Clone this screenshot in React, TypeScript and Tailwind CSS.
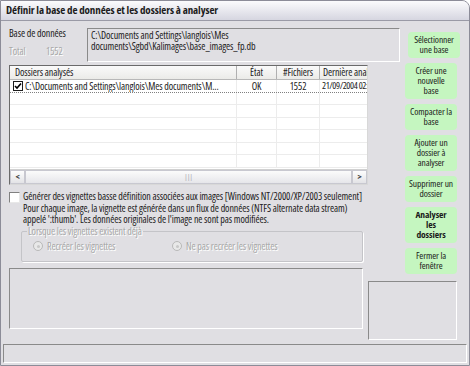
const sunken = "border border-t-[#8a8a8a] border-l-[#8a8a8a] border-b-white border-r-white";
const disabled = "text-[#a8a8a8] [text-shadow:1px_1px_0_#ffffff]";

function GreenButton({ lines, bold }: { lines: string[]; bold?: boolean }) {
  return (
    <div
      className={`w-[52px] rounded-[4px] bg-[#c5f6c0] py-[3px] text-center text-[9.5px] leading-[10px] text-[#1a1a1a] ${
        bold ? "font-bold" : ""
      }`}
    >
      {lines.map((l) => (
        <div key={l}>{l}</div>
      ))}
    </div>
  );
}

function Radio({ label }: { label: string }) {
  return (
    <div className="flex items-center gap-[4px]">
      <span className="flex h-[10px] w-[10px] items-center justify-center rounded-full border border-[#b8b8b8] bg-[#e8e8e8]">
        <span className="h-[3px] w-[3px] rounded-full bg-[#c8c8c8]" />
      </span>
      <span className={disabled}>{label}</span>
    </div>
  );
}

const rows = [0, 1, 2, 3, 4, 5, 6];

export default function App() {
  return (
    <div className="h-[366px] w-[470px] bg-white font-['Open_Sans',sans-serif] text-[10px] tracking-[-0.1px] text-[#202020] [font-stretch:75%]">
      <div className="flex h-full flex-col overflow-hidden rounded-tr-[8px] border border-[#8c8c98] bg-[#e0dfe3]">
        {/* title bar */}
        <div className="flex h-[20px] shrink-0 items-center border-b border-[#9a9aa6] bg-gradient-to-b from-[#fbfbfd] to-[#d6d6e0] pl-[5px] text-[11px] font-bold text-[#1c1c1c]">
          Définir la base de données et les dossiers à analyser
        </div>

        <div className="flex flex-1 flex-col px-[8px]">
          {/* top band */}
          <div className="flex items-start">
            <div className="mt-[6px] w-[78px] leading-[12px]">
              <div>Base de données</div>
              <div className={`mt-[6px] flex ${disabled}`}>
                <span className="w-[37px]">Total</span>
                <span>1552</span>
              </div>
            </div>
            <div className={`mt-[7px] h-[34px] w-[313px] ${sunken} px-[3px] pt-[1px] leading-[10.5px]`}>
              C:\Documents and Settings\langlois\Mes
              <br />
              documents\Sgbd\Kalimages\base_images_fp.db
            </div>
            <div className="ml-[8px] mt-[11px]">
              <GreenButton lines={["Sélectionner", "une base"]} />
            </div>
          </div>

          {/* main band */}
          <div className="flex">
            <div className="w-[361px]">
              {/* list */}
              <div className="mt-[3px] flex h-[120px] w-[359px] flex-col border border-t-[#6a6a6a] border-l-[#6a6a6a] border-b-[#d8d8d8] border-r-[#d8d8d8] bg-white">
                <div className="flex h-[14px] shrink-0 border-b border-[#b8b8b8] bg-gradient-to-b from-[#fafafa] to-[#ebebe8] leading-[13px]">
                  <div className="w-[227px] border-r border-[#b0b0b0] pl-[5px]">Dossiers analysés</div>
                  <div className="w-[40px] border-r border-[#b0b0b0] text-center">État</div>
                  <div className="w-[43px] border-r border-[#b0b0b0] text-center">#Fichiers</div>
                  <div className="flex-1 overflow-hidden whitespace-nowrap pl-[3px]">Dernière analyse</div>
                </div>
                <div className="flex-1 overflow-hidden">
                  {rows.map((r) => (
                    <div
                      key={r}
                      className={`flex h-[12.5px] border-b leading-[12px] ${
                        r === 0 ? "border-dotted border-[#808080]" : "border-[#ececec]"
                      }`}
                    >
                      <div className="flex w-[227px] items-center overflow-hidden whitespace-nowrap border-r border-solid border-[#ececec] pl-[3px]">
                        {r === 0 && (
                          <>
                            <span className="mr-[2px] flex h-[10px] w-[10px] shrink-0 items-center justify-center border border-[#1c1c1c] bg-white">
                              <svg width="8" height="8" viewBox="0 0 8 8">
                                <path d="M1 4 L3 6 L7 1.5" fill="none" stroke="#000" strokeWidth="1.6" />
                              </svg>
                            </span>
                            C:\Documents and Settings\langlois\Mes documents\M...
                          </>
                        )}
                      </div>
                      <div className="w-[40px] border-r border-solid border-[#ececec] text-center">{r === 0 ? "OK" : ""}</div>
                      <div className="w-[43px] border-r border-solid border-[#ececec] text-center">{r === 0 ? "1552" : ""}</div>
                      <div className="flex-1 overflow-hidden whitespace-nowrap pl-[2px] text-[9.5px] tracking-[-0.4px]">
                        {r === 0 ? "21/09/2004 02:2..." : ""}
                      </div>
                    </div>
                  ))}
                </div>
                {/* scrollbar */}
                <div className="flex h-[15px] shrink-0 border-t border-[#d0d0d0] bg-[#f3f3f1]">
                  <div className="flex w-[15px] items-center justify-center border border-[#c8c8d0] bg-gradient-to-b from-[#fdfdfd] to-[#e3e3e6] text-[9px] font-bold text-[#404040]">
                    &lt;
                  </div>
                  <div className="flex flex-1 items-center justify-center border border-[#c8c8d0] bg-gradient-to-b from-[#fbfbfb] to-[#e6e6ea] text-[7px] text-[#a0a0a8]">
                    |||
                  </div>
                  <div className="flex w-[15px] items-center justify-center border border-[#c8c8d0] bg-gradient-to-b from-[#fdfdfd] to-[#e3e3e6] text-[9px] font-bold text-[#404040]">
                    &gt;
                  </div>
                </div>
              </div>

              {/* thumbnail option */}
              <div className="mt-[6px] flex leading-[11.5px]">
                <span className="mr-[3px] mt-[1px] h-[11px] w-[11px] shrink-0 border border-t-[#808080] border-l-[#808080] border-b-[#e8e8e8] border-r-[#e8e8e8] bg-white" />
                <div className="whitespace-nowrap">
                  Générer des vignettes basse définition associées aux images [Windows NT/2000/XP/2003 seulement]
                  <br />
                  Pour chaque image, la vignette est générée dans un flux de données (NTFS alternate data stream)
                  <br />
                  appelé ':thumb'. Les données originales de l'image ne sont pas modifiées.
                </div>
              </div>

              {/* group box */}
              <div className="relative ml-[12px] mt-[5px] h-[31px] w-[342px] rounded-[2px] border border-[#c4c4c8] shadow-[1px_1px_0_#ffffff]">
                <span className={`absolute left-[5px] top-[-6px] bg-[#e0dfe3] px-[1px] leading-[10px] ${disabled}`}>
                  Lorsque les vignettes existent déjà
                </span>
                <div className="flex pl-[11px] pt-[7px]">
                  <div className="w-[139px]">
                    <Radio label="Recréer les vignettes" />
                  </div>
                  <Radio label="Ne pas recréer les vignettes" />
                </div>
              </div>

              {/* info panel */}
              <div className={`mt-[6px] h-[61px] w-[354px] ${sunken}`} />
            </div>

            <div className="flex flex-1 flex-col items-end pr-[6px]">
              <div className="mt-[1px] flex flex-col gap-[5px]">
                <GreenButton lines={["Créer une", "nouvelle", "base"]} />
                <GreenButton lines={["Compacter la", "base"]} />
                <GreenButton lines={["Ajouter un", "dossier à", "analyser"]} />
                <GreenButton lines={["Supprimer un", "dossier"]} />
                <GreenButton lines={["Analyser", "les", "dossiers"]} bold />
                <GreenButton lines={["Fermer la", "fenêtre"]} />
              </div>
              <div className={`mt-[7px] h-[59px] w-[89px] ${sunken}`} />
            </div>
          </div>
        </div>

        {/* status bar */}
        <div className={`mx-[2px] mb-[2px] h-[19px] shrink-0 ${sunken}`} />
      </div>
    </div>
  );
}
